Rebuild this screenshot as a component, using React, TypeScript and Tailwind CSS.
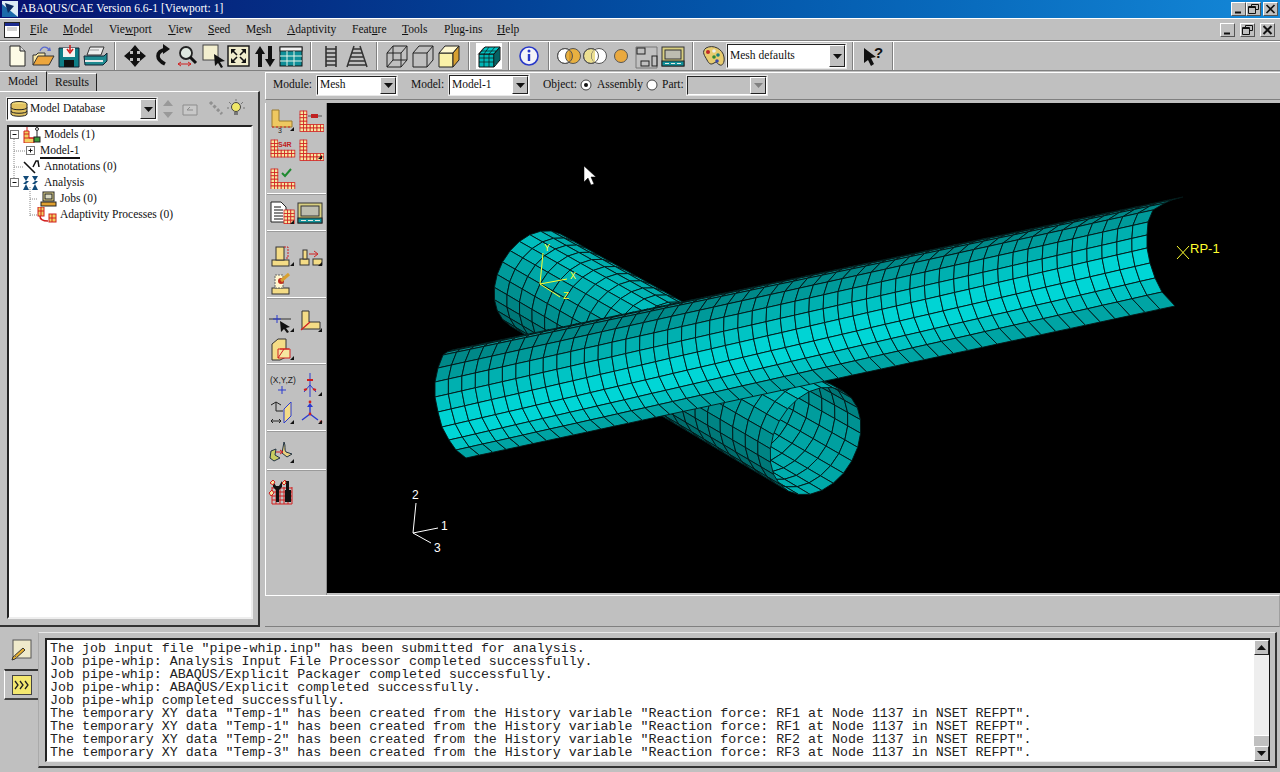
import React from "react";

type P = [number, number];
const lerp = (a: P, b: P, t: number): P => [a[0] + (b[0] - a[0]) * t, a[1] + (b[1] - a[1]) * t];
const pts = (a: P[]) => a.map((p) => `${p[0].toFixed(1)},${p[1].toFixed(1)}`).join(" ");

const leftRim: P[] = [[452,350],[447,352],[443,355],[438,368],[435,382],[435,397],[438,412],[442,427],[449,440],[456,450],[466,458]];
const rightRim: P[] = [[1183,197],[1172,200],[1165,203],[1153,210],[1148,222],[1147,235],[1147,248],[1150,263],[1155,278],[1162,292],[1175,306]];
const mainCols = ["#14a0a0","#0a8c8c","#008888","#009a9a","#00b0b0","#00c4c4","#00d4d4","#00d6d6","#00c4c4","#00a4a4"];

function mainPipe() {
  const out: { p: string; c: string }[] = [];
  const N = 50;
  const uf = (i: number) => { const u = i / N; return u - 0.06 * u * (1 - u); };
  for (let r = 0; r < mainCols.length; r++) {
    for (let i = 0; i < N; i++) {
      const u0 = uf(i), u1 = uf(i + 1);
      out.push({
        p: pts([lerp(leftRim[r], rightRim[r], u0), lerp(leftRim[r], rightRim[r], u1), lerp(leftRim[r + 1], rightRim[r + 1], u1), lerp(leftRim[r + 1], rightRim[r + 1], u0)]),
        c: mainCols[r],
      });
    }
  }
  return out;
}

function crossPipe() {
  const c0: P = [535.5, 280], c1: P = [815.5, 441];
  const e10: P = [25, -46], e11: P = [27.4, -50];
  const e20: P = [-33, -18], e21: P = [-36.3, -19.9];
  const R = 12, N = 22;
  const at = (u: number, th: number): P => {
    const c = lerp(c0, c1, u), a = lerp(e10, e11, u), b = lerp(e20, e21, u);
    return [c[0] + a[0] * Math.cos(th) + b[0] * Math.sin(th), c[1] + a[1] * Math.cos(th) + b[1] * Math.sin(th)];
  };
  const hex = (v: number) => { const h = Math.round(v).toString(16).padStart(2, "0"); return `#00${h}${h}`; };
  const back: { p: string; c: string }[] = [], front: { p: string; c: string }[] = [];
  for (let r = 0; r < R; r++) {
    const t0 = (r / R) * Math.PI, t1 = ((r + 1) / R) * Math.PI, f = (r + 0.5) / R;
    for (let i = 0; i < N; i++) {
      const u0 = i / N, u1 = (i + 1) / N;
      back.push({ p: pts([at(u0, -t0), at(u1, -t0), at(u1, -t1), at(u0, -t1)]), c: hex(f < 0.35 ? 96 + 170 * f : 156 + 40 * (f - 0.35)) });
      const g = f < 0.3 ? 160 + 30 * (f / 0.3) : 190 - 100 * ((f - 0.3) / 0.7);
      front.push({ p: pts([at(u0, t0), at(u1, t0), at(u1, t1), at(u0, t1)]), c: hex(g) });
    }
  }
  return [...back, ...front];
}

const MAIN = mainPipe();
const CROSS = crossPipe();

const Ico = ({ w = 26, h = 26, children }: { w?: number; h?: number; children: React.ReactNode }) => (
  <svg width={w} height={h} viewBox={`0 0 ${w} ${h}`} className="block shrink-0">{children}</svg>
);

/* toolbar icons */
const INew = () => <Ico><path d="M6 3h10l5 5v15H6z" fill="#fdfbe6" stroke="#222" /><path d="M16 3v5h5" fill="#ddd" stroke="#222" /></Ico>;
const IOpen = () => <Ico><path d="M3 22V12h3l2-2h7v3" fill="#f8e8a8" stroke="#333" /><path d="M3 22l5-9h16l-5 9z" fill="#eda63c" stroke="#333" /><path d="M10 8c2-5 7-5 9-1" fill="none" stroke="#5a6ad0" strokeWidth="1.3" /><path d="M17 8h4l-1-4z" fill="#5a6ad0" /></Ico>;
const ISave = () => <Ico><path d="M3 5h20v19H3z" fill="#0f7f87" stroke="#123" /><rect x="7" y="5" width="12" height="9" fill="#f4f4f0" /><rect x="8" y="17" width="10" height="7" fill="#111" /><path d="M14 2v6M11 6l3 4 3-4" stroke="#d02020" strokeWidth="1.6" fill="none" /></Ico>;
const IPrint = () => <Ico><path d="M8 4h14l-3 8H5z" fill="#eee" stroke="#333" /><path d="M2 13h20l3-3v8l-4 4H3z" fill="#1f8a90" stroke="#123" /><path d="M3 18h18" stroke="#e8e8e8" strokeWidth="2" /><path d="M7 7h10" stroke="#999" /></Ico>;
const IMove = () => <Ico><path d="M13 2l5 6h-3v3h3V8l6 5-6 5v-3h-3v3h3l-5 6-5-6h3v-3H8v3l-6-5 6-5v3h3V8H8z" fill="#111" /></Ico>;
const IRot = () => <Ico><path d="M19 6c-6 1-9 3-9 7s3 6 7 8" fill="none" stroke="#111" strokeWidth="3.6" /><path d="M15 1l7 5-7 5z" fill="#111" /></Ico>;
const IZoom = () => <Ico><circle cx="12" cy="10" r="6" fill="#dfe8e0" stroke="#222" strokeWidth="1.8" /><path d="M16 14l6 6" stroke="#111" strokeWidth="3" /><path d="M4 21h13M4 21l3-2M4 21l3 2M17 21l-3-2M17 21l-3 2" stroke="#d02020" fill="none" /></Ico>;
const IBox = () => <Ico><rect x="3" y="2" width="15" height="15" fill="#f3efcf" stroke="#444" /><path d="M14 11l11 7-5 1 3 5-2 1-3-5-3 3z" fill="#111" /></Ico>;
const IFit = () => <Ico><rect x="2" y="3" width="21" height="20" fill="#f0eccc" stroke="#111" strokeWidth="1.4" /><path d="M7 8l4 4M18 8l-4 4M7 18l4-4M18 18l-4-4" stroke="#111" strokeWidth="1.6" /><path d="M5 6h5l-5 5zM20 6h-5l5 5zM5 20h5l-5-5zM20 20h-5l5-5z" fill="#111" /></Ico>;
const IUpDn = () => <Ico><path d="M8 3l5 8H10v13H6V11H3z" fill="#111" /><path d="M18 24l-5-8h3V3h4v13h3z" fill="#111" /></Ico>;
const IGrid = () => <Ico><rect x="2" y="4" width="22" height="19" fill="#0f8f98" stroke="#111" /><rect x="2" y="4" width="22" height="4" fill="#f2f2f2" stroke="#222" /><path d="M9 8v15M16 8v15M2 13h22M2 18h22" stroke="#e8f4e8" /></Ico>;
const ILad = () => <Ico><path d="M8 3v21M18 3v21M8 6h10M8 10h10M8 14h10M8 18h10M8 22h10" stroke="#333" strokeWidth="1.6" /></Ico>;
const ILad2 = () => <Ico><path d="M10 3L3 24M16 3l7 21M9 6h8M8 10h10M6 14h14M5 18h16M4 22h18" stroke="#333" strokeWidth="1.5" /></Ico>;
const ICubeW = () => <Ico><path d="M3 10h14v14H3zM9 3h14v14H9zM3 10l6-7M17 10l6-7M3 24l6-7M17 24l6-7" fill="none" stroke="#222" /></Ico>;
const ICubeH = () => <Ico><path d="M3 10h14v14H3zM3 10l6-7h14l-6 7M23 3v14l-6 7" fill="none" stroke="#222" /></Ico>;
const ICubeS = () => <Ico><path d="M3 10h14v14H3z" fill="#fbf2a8" stroke="#222" /><path d="M3 10l6-7h14l-6 7z" fill="#fff9d0" stroke="#222" /><path d="M23 3v14l-6 7V10z" fill="#d8a030" stroke="#222" /></Ico>;
const IMeshC = () => (
  <div className="w-[26px] h-[26px] bg-white">
    <Ico>
      <path d="M3 11h15v13H3z" fill="#00b5b5" stroke="#111" /><path d="M3 11l6-7h15l-6 7z" fill="#00c5c5" stroke="#111" /><path d="M24 4v13l-6 7V11z" fill="#008c90" stroke="#111" />
      <path d="M8 11v13M13 11v13M3 15h15M3 19h15M5 8h15M8 4.5l-6 7M13 4l-5 7M19 4l-6 7M20 8v13M22 6v13" stroke="#111" strokeWidth=".7" fill="none" />
    </Ico>
  </div>
);
const IInfo = () => <Ico><circle cx="13" cy="13" r="9" fill="#f4f4f8" stroke="#2838c8" strokeWidth="1.6" /><path d="M13 11v7" stroke="#2838c8" strokeWidth="2.4" /><circle cx="13" cy="8" r="1.5" fill="#2838c8" /></Ico>;
const IVenn1 = () => <Ico><circle cx="9" cy="13" r="7.5" fill="#fff" stroke="#555" /><circle cx="17" cy="13" r="7.5" fill="#e8b040" stroke="#555" /><path d="M13 6.7a7.5 7.5 0 0 1 0 12.6z" fill="#d89a28" /><circle cx="9" cy="13" r="7.5" fill="none" stroke="#555" /></Ico>;
const IVenn2 = () => <Ico><circle cx="9" cy="13" r="7.5" fill="#ecdf90" stroke="#555" /><circle cx="17" cy="13" r="7.5" fill="#fff" stroke="#555" /><path d="M13 6.7a7.5 7.5 0 0 0 0 12.6z" fill="#ecdf90" /><circle cx="9" cy="13" r="7.5" fill="none" stroke="#555" /></Ico>;
const ISph = () => <Ico><circle cx="13" cy="13" r="6.5" fill="#eaa93e" stroke="#555" /></Ico>;
const ILay = () => <Ico><path d="M2 4h21v21H2z" fill="none" stroke="#777" /><rect x="3" y="5" width="8" height="6" fill="none" stroke="#222" /><rect x="18" y="13" width="5" height="10" fill="none" stroke="#222" /><rect x="7" y="18" width="8" height="5" fill="none" stroke="#222" /></Ico>;
const IMon = () => (
  <Ico>
    <rect x="2" y="4" width="22" height="19" fill="#d8cf80" stroke="#333" /><rect x="5" y="7" width="16" height="9" fill="#bdbdb0" stroke="#333" /><rect x="2" y="18" width="22" height="5" fill="#119098" stroke="#222" /><path d="M5 20.5h4M11 20.5h4M17 20.5h4" stroke="#e8e8e0" />
  </Ico>
);
const IPal = () => (
  <Ico>
    <path d="M6 5c7-4 17 1 18 9 1 6-2 9-4 8-3-1-3-4-6-2s-5 1-7-3-6-8-1-12z" fill="#e8cc70" stroke="#333" />
    <circle cx="8" cy="9" r="2" fill="#c02828" /><circle cx="14" cy="8" r="1.8" fill="#eee" /><circle cx="18" cy="12" r="1.8" fill="#1a7f80" /><circle cx="14" cy="14" r="1.8" fill="#2d8a36" /><circle cx="17" cy="18" r="1.8" fill="#3848a8" />
  </Ico>
);
const IHelp = () => (
  <Ico>
    <path d="M4 5l12 9-5 1 3 6-3 2-3-6-4 3z" fill="#111" />
    <text x="14" y="15" fontSize="15" fontWeight="700" fontFamily="Liberation Sans, sans-serif" fill="#111">?</text>
  </Ico>
);

/* toolbox icons */
const Fly = () => <path d="M26 24h-4l4-4z" fill="#111" />;
const YL = "#f4dc86";
const cellsL = (x: number, y: number, cw: number, h: number, w: number, s = 3.4) => {
  const a: React.ReactNode[] = [];
  for (let j = 0; j < h; j++) {
    for (let i = 0; i < w; i++) {
      if (i < cw || j >= h - 2) a.push(<rect key={`${i}-${j}`} x={x + i * s} y={y + j * s} width={s} height={s} fill="#f6e6a0" stroke="#d21f1f" strokeWidth=".8" />);
    }
  }
  return a;
};
const TL1 = () => (
  <Ico w={28} h={26}>
    <path d="M4 3h7v11h13v6H4z" fill="#efc860" stroke="#9a7b30" />
    <path d="M4 20h20" stroke="#d02020" strokeDasharray="2 2" />
    <text x="10" y="26" fontSize="7" fontFamily="Liberation Sans, sans-serif" fill="#222">3</text>
    <Fly />
  </Ico>
);
const TMeshBar = () => <Ico w={28} h={26}>{cellsL(4, 4, 2, 6, 7)}<path d="M12 9h14" stroke="#555" /><rect x="15" y="7" width="7" height="4" fill="#c02020" /></Ico>;
const TS4R = () => (
  <Ico w={28} h={26}>
    {cellsL(3, 5, 2, 5, 7)}
    <rect x="10" y="4" width="17" height="9" fill="#c0c0c0" />
    <text x="10" y="12" fontSize="7" fontWeight="700" fontFamily="Liberation Sans, sans-serif" fill="#c02020">S4R</text>
  </Ico>
);
const TMeshF = () => <Ico w={28} h={26}>{cellsL(4, 5, 2, 6, 7)}<Fly /></Ico>;
const TMeshC = () => <Ico w={28} h={26}>{cellsL(3, 6, 2, 6, 7)}<path d="M14 10l3 3 6-7" stroke="#1f8a30" strokeWidth="2" fill="none" /></Ico>;
const TDoc = () => (
  <Ico w={28} h={26}>
    <path d="M3 2h10l5 5v15H3z" fill="#fff" stroke="#222" /><path d="M6 7h7M6 10h9M6 13h9M6 16h9M6 19h9" stroke="#111" />
    {cellsL(16, 10, 3, 4, 3)}<Fly />
  </Ico>
);
const TMon = () => <Ico w={28} h={26}><rect x="2" y="3" width="24" height="20" fill="#d8cf80" stroke="#333" /><rect x="5" y="6" width="18" height="10" fill="#bdbdb0" stroke="#333" /><rect x="2" y="18" width="24" height="5" fill="#119098" stroke="#222" /><path d="M5 20.5h5M12 20.5h5M19 20.5h5" stroke="#e8e8e0" /></Ico>;
const TPart1 = () => <Ico w={28} h={26}><rect x="4" y="18" width="17" height="6" fill={YL} stroke="#333" /><rect x="8" y="5" width="8" height="13" fill={YL} stroke="#333" /><path d="M16 5h4v11h-2" stroke="#d02020" strokeDasharray="2 1" fill="none" /><Fly /></Ico>;
const TPart2 = () => <Ico w={28} h={26}><rect x="4" y="17" width="9" height="6" fill={YL} stroke="#333" /><rect x="7" y="8" width="4" height="9" fill={YL} stroke="#333" /><rect x="17" y="17" width="9" height="6" fill={YL} stroke="#333" /><path d="M13 12h8M18 9l4 3-4 3" stroke="#d02020" fill="none" /><Fly /></Ico>;
const TPart3 = () => <Ico w={28} h={26}><rect x="4" y="18" width="17" height="6" fill={YL} stroke="#333" /><rect x="7" y="5" width="8" height="13" fill="#fff7d0" stroke="#666" strokeDasharray="2 1" /><circle cx="13" cy="11" r="3" fill="#c03020" /><path d="M13 11l8-7" stroke="#d8a030" strokeWidth="3" /></Ico>;
const TEdge = () => <Ico w={28} h={26}><path d="M1 11h22" stroke="#333" /><path d="M9 7v8M5 11h8" stroke="#2a3ad0" /><path d="M12 13l10 6-4 1 3 4-2 1-3-4-3 3z" fill="#111" /><Fly /></Ico>;
const TL2 = () => <Ico w={28} h={26}><path d="M6 3h7v11h11v7H6z" fill={YL} stroke="#333" /><path d="M5 22l9-8" stroke="#d02020" strokeWidth="1.4" /><Fly /></Ico>;
const TBox3 = () => <Ico w={28} h={26}><path d="M4 8l6-5h8v18l-6 3H4z" fill={YL} stroke="#333" /><path d="M10 13h12v9H10z" fill="#f6e6a0" stroke="#d02020" /><path d="M10 22l6-9M12 13h9" stroke="#d02020" /><Fly /></Ico>;
const TXyz = () => (
  <Ico w={28} h={26}>
    <text x="2" y="11" fontSize="8.5" fontFamily="Liberation Sans, sans-serif" fill="#222">(X,Y,Z)</text>
    <path d="M14 14v8M10 18h8" stroke="#2a3ad0" />
  </Ico>
);
const TAxis = () => <Ico w={28} h={26}><path d="M14 1v24M14 13l-6 7M14 13l6 7" stroke="#2a3ad0" /><path d="M11 8h6M8 18l3-1M20 18l-3-1" stroke="#d02020" strokeWidth="2" /><Fly /></Ico>;
const TPlane = () => <Ico w={28} h={26}><path d="M8 11V2M8 11h7M3 5l5-3 5 3" stroke="#222" fill="none" /><path d="M3 21h10M3 21l2-2M3 21l2 2M13 21l-2-2M13 21l-2 2" stroke="#222" /><path d="M16 9l7-7v14l-7 7z" fill={YL} stroke="#2a3ad0" /><Fly /></Ico>;
const TTriad = () => <Ico w={28} h={26}><path d="M14 14V6M14 14l-8 6M14 14l8 6" stroke="#2a3ad0" strokeWidth="1.4" /><path d="M11 7l3-4 3 4z" fill="#2a3ad0" /><circle cx="14" cy="2" r="1.4" fill="#d02020" /><circle cx="14" cy="14" r="1.4" fill="#d02020" /><circle cx="25" cy="22" r="1.4" fill="#d02020" /><Fly /></Ico>;
const TShell = () => <Ico w={28} h={26}><path d="M3 12l5-2-1 6 5 3-6 3-4-3z" fill="#c8cc60" stroke="#234" /><path d="M16 3c2 4 0 8 2 10l6 2-5 3-5-4z" fill="#e8d080" stroke="#234" /><path d="M8 13h6M12 11l3 2-3 2" stroke="#d02020" fill="none" /><Fly /></Ico>;
const TTools = () => (
  <Ico w={28} h={28}>
    {Array.from({ length: 6 }).map((_, i) => <path key={i} d={`M${4 + i * 4} 9v17`} stroke="#d21f1f" />)}
    {Array.from({ length: 5 }).map((_, i) => <path key={i} d={`M4 ${10 + i * 4}h20`} stroke="#d21f1f" />)}
    <path d="M5 3l3 5h3l3-5v6l-3 3v12H8V12L5 9z" fill="#111" /><path d="M18 3h3v9h2v12h-6V12h1z" fill="#111" />
    <path d="M2 5l3-3 2 2-2 3zM14 5l3-3 1 3-2 2zM1 15l3-3 2 3-3 3z" fill="#f6e6a0" stroke="#d21f1f" />
  </Ico>
);

const Arrow = ({ disabled }: { disabled?: boolean }) => (
  <div className="w-[16px] shrink-0 bg-[#c0c0c0] border border-t-white border-l-white border-r-[#222] border-b-[#222] flex items-center justify-center">
    <svg width="9" height="5" viewBox="0 0 9 5"><path d="M0 0h9L4.5 5z" fill={disabled ? "#808080" : "#111"} /></svg>
  </div>
);

const Select = ({ label, className, disabled, icon }: { label?: string; className: string; disabled?: boolean; icon?: React.ReactNode }) => (
  <div className={`flex border border-t-[#222] border-l-[#222] border-b-white border-r-white shadow-[0_0_0_1px_#e8e8e8] ${disabled ? "bg-[#c0c0c0]" : "bg-white"} ${className}`}>
    <div className="flex-1 flex items-center gap-[2px] pl-[2px] overflow-hidden text-[11.5px] text-[#111] whitespace-nowrap">
      {icon}
      {label}
    </div>
    <Arrow disabled={disabled} />
  </div>
);

const Tb = ({ children }: { children: React.ReactNode }) => <div className="w-[26px] h-[26px] shrink-0">{children}</div>;
const Sep = () => (
  <div className="w-[14px] h-[28px] shrink-0 flex justify-center">
    <div className="w-[2px] h-full border-l border-[#808080] border-r border-r-white" />
  </div>
);

const WinBtn = ({ kind, mr, big }: { kind: "min" | "max" | "close"; mr: string; big?: boolean }) => (
  <div className={`w-[15px] h-[14px] bg-[#c0c0c0] border border-t-white border-l-white border-r-[#555] border-b-[#555] flex items-center justify-center ${mr}`}>
    <svg width="11" height="10" viewBox="0 0 11 10">
      {kind === "min" && <path d="M2 8.5h6" stroke="#111" strokeWidth="2" />}
      {kind === "max" && <path d="M3.5 2.5V.5h7v5H8M.5 2.5h7v7h-7zM.5 3.5h7" stroke="#111" fill="none" />}
      {kind === "close" && <path d="M1.5 1l8 8M9.5 1l-8 8" stroke="#111" strokeWidth={big ? 2 : 1.6} />}
    </svg>
  </div>
);

const MENU: [string, string, string, number][] = [
  ["", "F", "ile", 33], ["", "M", "odel", 46], ["Vie", "w", "port", 59], ["", "V", "iew", 40], ["", "S", "eed", 38], ["M", "e", "sh", 41],
  ["", "A", "daptivity", 65], ["Feat", "u", "re", 50], ["", "T", "ools", 42], ["P", "l", "ug-ins", 53], ["", "H", "elp", 40],
];

const Tree = ({ pl, icon, children, u }: { pl: number; icon?: React.ReactNode; children: string; u?: boolean }) => (
  <div className="h-[16px] flex items-center" style={{ paddingLeft: pl }}>
    {icon}
    <span className={`text-[11.5px] text-[#111] whitespace-nowrap ${u ? "border-b-2 border-[#111] leading-[14px] h-[16px]" : ""}`}>{children}</span>
  </div>
);

const Group = ({ h, pt, rows }: { h: string; pt: string; rows: React.ReactNode[][] }) => (
  <div className={`${h} ${pt} border-b border-b-white shadow-[0_1px_0_#9a9a9a] flex flex-col`}>
    {rows.map((r, i) => (
      <div key={i} className="h-[28px] flex pl-[1px]">
        {r.map((c, j) => <div key={j} className="w-[28px] h-[28px] flex items-center">{c}</div>)}
      </div>
    ))}
  </div>
);

const LINES = [
  'The job input file "pipe-whip.inp" has been submitted for analysis.',
  "Job pipe-whip: Analysis Input File Processor completed successfully.",
  "Job pipe-whip: ABAQUS/Explicit Packager completed successfully.",
  "Job pipe-whip: ABAQUS/Explicit completed successfully.",
  "Job pipe-whip completed successfully.",
  'The temporary XY data "Temp-1" has been created from the History variable "Reaction force: RF1 at Node 1137 in NSET REFPT".',
  'The temporary XY data "Temp-1" has been created from the History variable "Reaction force: RF1 at Node 1137 in NSET REFPT".',
  'The temporary XY data "Temp-2" has been created from the History variable "Reaction force: RF2 at Node 1137 in NSET REFPT".',
  'The temporary XY data "Temp-3" has been created from the History variable "Reaction force: RF3 at Node 1137 in NSET REFPT".',
];

export default function App() {
  return (
    <div className="w-[1280px] h-[772px] bg-[#c0c0c0] flex flex-col overflow-hidden font-['Liberation_Serif',serif] text-[11.5px] text-[#111]">
      {/* title */}
      <div className="h-[18px] shrink-0 flex items-center bg-gradient-to-r from-[#08106e] to-[#1488d8] text-white">
        <svg width="16" height="16" viewBox="0 0 16 16" className="ml-[2px] shrink-0">
          <rect width="16" height="16" fill="#dcecf4" /><path d="M0 3l16 13H0z" fill="#1a6aaa" /><path d="M3 2l9 3-6 7z" fill="#0b2a60" />
        </svg>
        <span className="ml-[2px] text-[11.5px] whitespace-nowrap">ABAQUS/CAE Version 6.6-1 [Viewport: 1]</span>
        <div className="flex-1" />
        <WinBtn kind="min" mr="" />
        <WinBtn kind="max" mr="mr-[2px]" />
        <WinBtn kind="close" mr="mr-[2px]" />
      </div>
      {/* menu */}
      <div className="h-[23px] shrink-0 flex items-center border-t border-t-white border-b border-b-[#808080]">
        <svg width="16" height="16" viewBox="0 0 16 16" className="ml-[4px] shrink-0">
          <rect x=".5" y=".5" width="15" height="15" fill="#fff" stroke="#222" /><rect x="1" y="1" width="14" height="3" fill="#1c2c90" /><path d="M3 6h10M3 8h10" stroke="#aaa" />
        </svg>
        <div className="flex ml-[10px]">
          {MENU.map(([a, b, c, w]) => (
            <div key={a + b + c} className="text-[11.5px] whitespace-nowrap" style={{ width: w }}>
              {a}<span className="underline">{b}</span>{c}
            </div>
          ))}
        </div>
        <div className="flex-1" />
        <WinBtn kind="min" mr="mr-[5px]" big />
        <WinBtn kind="max" mr="mr-[5px]" big />
        <WinBtn kind="close" mr="mr-[5px]" big />
      </div>
      {/* toolbar */}
      <div className="h-[30px] shrink-0 flex items-center pl-[4px] border-t border-t-white border-b border-b-[#808080]">
        <Tb><INew /></Tb><Tb><IOpen /></Tb><Tb><ISave /></Tb><Tb><IPrint /></Tb><Sep />
        <Tb><IMove /></Tb><Tb><IRot /></Tb><Tb><IZoom /></Tb><Tb><IBox /></Tb><Tb><IFit /></Tb><Tb><IUpDn /></Tb><Tb><IGrid /></Tb><Sep />
        <Tb><ILad /></Tb><Tb><ILad2 /></Tb><Sep />
        <Tb><ICubeW /></Tb><Tb><ICubeH /></Tb><Tb><ICubeS /></Tb><Sep />
        <Tb><IMeshC /></Tb><Sep />
        <Tb><IInfo /></Tb><Sep />
        <Tb><IVenn1 /></Tb><Tb><IVenn2 /></Tb><Tb><ISph /></Tb><Tb><ILay /></Tb><Tb><IMon /></Tb><Sep />
        <Tb><IPal /></Tb>
        <Select label="Mesh defaults" className="w-[119px] h-[24px] ml-[1px] shrink-0" />
        <Sep />
        <Tb><IHelp /></Tb>
        <Sep />
      </div>
      {/* body */}
      <div className="h-[557px] shrink-0 flex">
        {/* left */}
        <div className="w-[260px] shrink-0 flex flex-col pt-[1px]">
          <div className="h-[19px] flex items-end shrink-0">
            <div className="w-[47px] h-[20px] border-t border-t-white border-r border-r-[#222] flex items-center pl-[8px] relative z-10 text-[11.5px]">Model</div>
            <div className="w-[49px] h-[18px] ml-[1px] bg-[#b4b4b4] border-t border-t-white border-r border-r-[#222] flex items-center pl-[7px] text-[11.5px]">Results</div>
          </div>
          <div className="flex-1 border-t border-t-white border-r-2 border-r-[#333] border-b-2 border-b-[#333] flex flex-col pl-[7px] pr-[5px] mb-[1px]">
            <div className="h-[22px] mt-[6px] shrink-0 flex items-center">
              <Select
                label="Model Database"
                className="w-[150px] h-[22px] shrink-0"
                icon={
                  <svg width="18" height="16" viewBox="0 0 18 16" className="shrink-0">
                    <ellipse cx="9" cy="3" rx="8" ry="2.5" fill="#eed878" stroke="#222" /><path d="M1 3v10c0 3 16 3 16 0V3" fill="#e2c260" stroke="#222" /><path d="M1 6.5c0 3 16 3 16 0M1 10c0 3 16 3 16 0" fill="none" stroke="#222" />
                  </svg>
                }
              />
              <svg width="96" height="22" viewBox="0 0 96 22" className="shrink-0">
                <path d="M11 2l-5 6h10zM11 20l-5-6h10z" fill="#999" />
                <path d="M26 7h14v10H26z" fill="#c8c8c8" stroke="#8c8c8c" /><path d="M30 12h6M30 12l3-3" stroke="#8c8c8c" fill="none" />
                <path d="M53 4l4 4 4 4 4 4" stroke="#909090" strokeWidth="3" strokeDasharray="3 2" />
                <circle cx="79" cy="9" r="4.5" fill="#f0e868" stroke="#444" /><path d="M77 14h4v3h-4z" fill="#777" /><path d="M72 4l2 2M86 4l-2 2M70 10h2M86 10h2M79 1v2" stroke="#777" />
              </svg>
            </div>
            <div className="h-[494px] mt-[5px] shrink-0 bg-white border-2 border-t-[#222] border-l-[#222] border-r-[#eee] border-b-[#eee] relative">
              <svg width="60" height="100" viewBox="0 0 60 100" className="absolute left-0 top-0">
                <path d="M5 12v40M5 24h12M21 20v4M5 40h10M21 60v30M21 72h8M21 88h8" stroke="#888" strokeDasharray="1 1" fill="none" />
                <rect x="1.5" y="3.5" width="8" height="8" fill="#fff" stroke="#777" /><path d="M3.5 7.5h4" stroke="#111" />
                <rect x="17.5" y="19.5" width="8" height="8" fill="#fff" stroke="#777" /><path d="M19.5 23.5h4M21.5 21.5v4" stroke="#111" />
                <rect x="1.5" y="51.5" width="8" height="8" fill="#fff" stroke="#777" /><path d="M3.5 55.5h4" stroke="#111" />
              </svg>
              <div className="flex flex-col">
                <Tree pl={12} icon={<svg width="22" height="16" viewBox="0 0 22 16" className="shrink-0 mr-[1px]"><path d="M3 4h5v7h5v5H3z" fill="#f0d060" stroke="#d21f1f" /><path d="M6 0v4M3 7h5M3 11h10" stroke="#d21f1f" /><circle cx="16" cy="2" r="1.5" fill="none" stroke="#222" /><path d="M16 4v7" stroke="#222" /><rect x="13" y="10" width="6" height="5" fill="#3a9a3a" stroke="#222" /></svg>}>Models (1)</Tree>
                <Tree pl={31} u>Model-1</Tree>
                <Tree pl={12} icon={<svg width="22" height="16" viewBox="0 0 22 16" className="shrink-0 mr-[1px]"><path d="M3 3l11 11" stroke="#111" strokeWidth="1.6" /><path d="M12 8l3-6h2l1 6" fill="none" stroke="#111" strokeWidth="1.5" /></svg>}>Annotations (0)</Tree>
                <Tree pl={12} icon={<svg width="22" height="16" viewBox="0 0 22 16" className="shrink-0 mr-[1px]"><path d="M2 1h6L5 6l3 0-3 3 3 6H2l3-6-3 0 3-3zM11 1h6l-3 5 3 0-3 3 3 6h-6l3-6-3 0 3-3z" fill="#124a78" /></svg>}>Analysis</Tree>
                <Tree pl={28} icon={<svg width="22" height="16" viewBox="0 0 22 16" className="shrink-0 mr-[1px]"><rect x="6" y="1" width="11" height="9" fill="#e8dc90" stroke="#222" /><rect x="8" y="3" width="7" height="5" fill="#d8d8c0" stroke="#222" /><rect x="4" y="11" width="15" height="4" fill="#e0a030" stroke="#222" /></svg>}>Jobs (0)</Tree>
                <Tree pl={28} icon={<svg width="22" height="16" viewBox="0 0 22 16" className="shrink-0 mr-[1px]"><g stroke="#d21f1f" fill="#f0d060"><rect x="1" y="0" width="6" height="9" /><rect x="12" y="7" width="7" height="8" /></g><path d="M1 4h6M4 0v9M12 11h7M15 7v8" stroke="#d21f1f" /><path d="M3 9c0 4 3 5 8 5" stroke="#d21f1f" strokeWidth="1.6" fill="none" /></svg>}>Adaptivity Processes (0)</Tree>
              </div>
            </div>
          </div>
        </div>
        {/* right */}
        <div className="flex-1 ml-[5px] flex flex-col pt-[1px]">
          <div className="h-[28px] shrink-0 flex items-center border-t border-t-white border-b border-b-[#808080] border-l border-l-white pl-[7px] pb-[2px]">
            <span className="w-[44px] shrink-0">Module:</span>
            <Select label="Mesh" className="w-[80px] h-[19px] shrink-0" />
            <span className="ml-[14px] w-[38px] shrink-0">Model:</span>
            <Select label="Model-1" className="w-[80px] h-[20px] shrink-0" />
            <span className="ml-[14px] w-[37px] shrink-0">Object:</span>
            <svg width="12" height="12" viewBox="0 0 12 12" className="shrink-0 mr-[5px]"><circle cx="6" cy="6" r="5" fill="#fff" stroke="#444" /><circle cx="6" cy="6" r="2" fill="#111" /></svg>
            <span className="w-[49px] shrink-0">Assembly</span>
            <svg width="12" height="12" viewBox="0 0 12 12" className="shrink-0 mr-[4px]"><circle cx="6" cy="6" r="5" fill="#fff" stroke="#444" /></svg>
            <span className="w-[25px] shrink-0">Part:</span>
            <Select className="w-[80px] h-[19px] shrink-0" disabled />
          </div>
          <div className="h-[492px] mt-[3px] shrink-0 flex">
            <div className="w-[62px] shrink-0 flex flex-col border-l border-l-white border-r border-r-[#909090] pl-[1px]">
              <Group h="h-[91px]" pt="pt-[3px]" rows={[[<TL1 />, <TMeshBar />], [<TS4R />, <TMeshF />], [<TMeshC />]]} />
              <Group h="h-[37px]" pt="pt-[5px]" rows={[[<TDoc />, <TMon />]]} />
              <Group h="h-[67px]" pt="pt-[10px]" rows={[[<TPart1 />, <TPart2 />], [<TPart3 />]]} />
              <Group h="h-[66px]" pt="pt-[9px]" rows={[[<TEdge />, <TL2 />], [<TBox3 />]]} />
              <Group h="h-[67px]" pt="pt-[7px]" rows={[[<TXyz />, <TAxis />], [<TPlane />, <TTriad />]]} />
              <Group h="h-[39px]" pt="pt-[7px]" rows={[[<TShell />]]} />
              <div className="pt-[8px] pl-[1px]"><TTools /></div>
            </div>
            <div className="flex-1 h-[490px] bg-black">
              <svg viewBox="327 103 953 490" className="block w-full h-full">
                <g stroke="#031616" strokeWidth=".9" strokeLinejoin="round">
                  {CROSS.map((q, i) => <polygon key={i} points={q.p} fill={q.c} />)}
                  {MAIN.map((q, i) => <polygon key={i} points={q.p} fill={q.c} />)}
                </g>
                <g stroke="#ffff30" fill="none">
                  <path d="M543 253l-3 31 27-5M540 284l20 13" />
                  <path d="M1177 246l12 13M1189 246l-12 13" />
                </g>
                <g fill="#ffff30" fontFamily="Liberation Mono, monospace" fontSize="10">
                  <text x="544" y="251">Y</text>
                  <text x="570" y="279">X</text>
                  <text x="563" y="299">Z</text>
                </g>
                <text x="1190" y="253" fill="#ffff30" fontFamily="Liberation Sans, sans-serif" fontSize="13">RP-1</text>
                <path d="M416 503l-3 30 25-5M413 533l18 10" stroke="#fff" fill="none" />
                <g fill="#fff" fontFamily="Liberation Sans, sans-serif" fontSize="12">
                  <text x="412" y="499">2</text>
                  <text x="441" y="530">1</text>
                  <text x="434" y="552">3</text>
                </g>
                <path d="M584 166v16l4-4 3 7 3-1-3-7h5z" fill="#fff" stroke="#000" strokeWidth=".5" />
              </svg>
            </div>
          </div>
          <div className="h-[32px] shrink-0 border-t border-t-white border-b border-b-[#808080] border-r border-r-[#a0a0a0]" />
        </div>
      </div>
      {/* message */}
      <div className="flex-1 flex pt-[3px]">
        <div className="w-[38px] shrink-0 flex flex-col pl-[4px]">
          <div className="h-[38px] pt-[8px] pl-[7px]">
            <svg width="22" height="24" viewBox="0 0 22 24">
              <rect x="2" y="1" width="18" height="18" fill="#efeacb" stroke="#555" /><path d="M1 21l3-1 10-9-2-2-10 9z" fill="#e8b030" stroke="#333" /><path d="M3 16l3 3" stroke="#666" />
            </svg>
          </div>
          <div className="h-[31px] -mr-[1px] border-t-2 border-t-[#333] border-b-2 border-b-[#444] border-l border-l-white flex items-center pl-[7px] bg-[#c0c0c0]">
            <div className="w-[20px] h-[20px] bg-[#f4e870] border border-[#444] flex items-center justify-center">
              <svg width="16" height="10" viewBox="0 0 16 10"><path d="M1 1l3 4-3 4M6 1l3 4-3 4M11 1l3 4-3 4" stroke="#222" strokeWidth="1.3" fill="none" /></svg>
            </div>
          </div>
        </div>
        <div className="w-[1239px] h-[136px] mt-[1px] shrink-0 border-t border-t-[#e8e8e8] border-r-2 border-r-[#333] border-b-2 border-b-[#333] border-l border-l-[#aaa] pt-[5px] pl-[6px] pr-[5px]">
          <div className="h-[124px] bg-white border border-t-[#222] border-t-2 border-l-[#222] border-l-2 border-b-[#eee] flex overflow-hidden">
            <div className="flex-1 pl-[3px] pt-[2px] font-['Liberation_Mono',monospace] text-[13.3px] leading-[13px] text-[#222] whitespace-pre overflow-hidden">
              {LINES.map((l, i) => <div key={i} className="h-[13px]">{l}</div>)}
            </div>
            <div className="w-[15px] shrink-0 flex flex-col bg-[radial-gradient(#bbb_0.6px,#eee_0.7px)] bg-[length:2px_2px]">
              <div className="h-[15px] bg-[#c0c0c0] border border-t-white border-l-white border-r-[#222] border-b-[#222] flex items-center justify-center"><svg width="9" height="5" viewBox="0 0 9 5"><path d="M0 5h9L4.5 0z" fill="#111" /></svg></div>
              <div className="flex-1" />
              <div className="h-[11px] bg-[#c0c0c0] border-t border-t-white" />
              <div className="h-[15px] bg-[#c0c0c0] border border-t-white border-l-white border-r-[#222] border-b-[#222] flex items-center justify-center"><svg width="9" height="5" viewBox="0 0 9 5"><path d="M0 0h9L4.5 5z" fill="#111" /></svg></div>
            </div>
          </div>
        </div>
      </div>
    </div>
  );
}
